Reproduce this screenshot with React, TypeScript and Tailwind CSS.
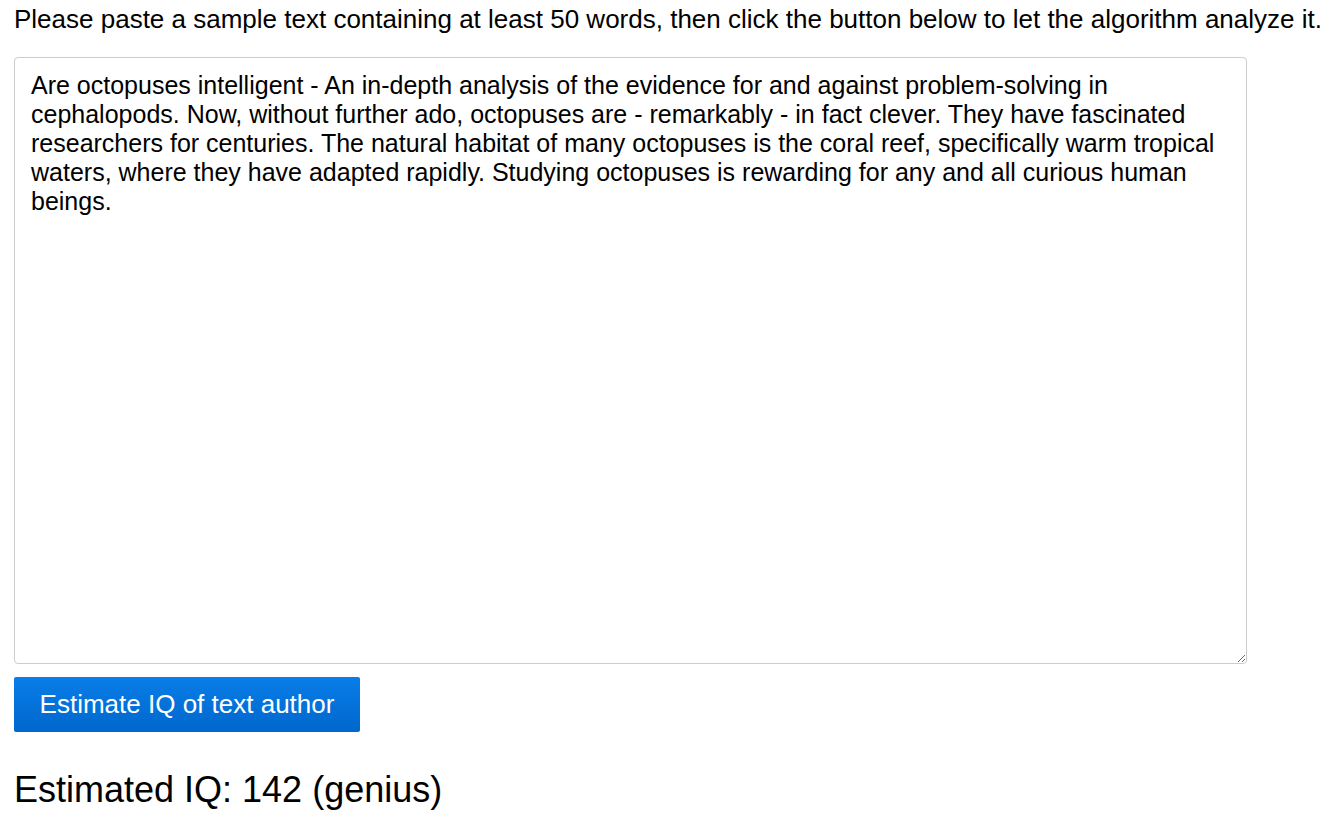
import { useState } from "react"

const SAMPLE =
  "Are octopuses intelligent - An in-depth analysis of the evidence for and against problem-solving in cephalopods. Now, without further ado, octopuses are - remarkably - in fact clever. They have fascinated researchers for centuries. The natural habitat of many octopuses is the coral reef, specifically warm tropical waters, where they have adapted rapidly. Studying octopuses is rewarding for any and all curious human beings."

export default function App() {
  const [text, setText] = useState(SAMPLE)

  return (
    <div className="min-h-screen bg-white px-[14px] text-black" style={{ fontFamily: '"Liberation Sans", Arial, sans-serif' }}>
      <p className="pt-[4px] text-[26px] leading-[30px] whitespace-nowrap">
        Please paste a sample text containing at least 50 words, then click the button below to let the algorithm analyze it.
      </p>

      <textarea
        value={text}
        onChange={(e) => setText(e.target.value)}
        className="mt-[23px] block h-[607px] w-[1233px] resize rounded-[4px] border border-[#cccccc] px-[16px] pt-[13px] pb-[10px] text-[25px] leading-[29px] outline-none"
        style={{ fontFamily: '"Liberation Sans", Arial, sans-serif' }}
      />

      <button className="mt-[13px] h-[55px] w-[346px] rounded-[2px] bg-gradient-to-b from-[#0a7de8] to-[#0067cd] text-[26px] text-white">
        Estimate IQ of text author
      </button>

      <div className="mt-[36px] text-[36px] leading-[44px]">Estimated IQ: 142 (genius)</div>
    </div>
  )
}
